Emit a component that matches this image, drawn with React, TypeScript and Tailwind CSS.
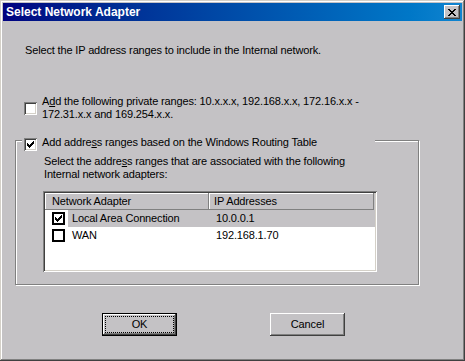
import type { ReactNode } from "react";

const CheckMark = () => (
  <svg width="7" height="7" viewBox="0 0 7 7" shapeRendering="crispEdges">
    <path
      d="M0 2h1v3H0zM1 3h1v3H1zM2 4h1v3H2zM3 3h1v3H3zM4 2h1v3H4zM5 1h1v3H5zM6 0h1v3H6z"
      fill="#000"
    />
  </svg>
);

const Checkbox = ({ checked }: { checked?: boolean }) => (
  <span className="flex h-[13px] w-[13px] shrink-0 items-center justify-center bg-white shadow-[inset_1px_1px_0_#808080,inset_-1px_-1px_0_#fff,inset_2px_2px_0_#404040,inset_-2px_-2px_0_#d4d0c8]">
    {checked && <CheckMark />}
  </span>
);

const ListCheckbox = ({ checked }: { checked?: boolean }) => (
  <span className="flex h-[13px] w-[13px] shrink-0 items-center justify-center border-2 border-black bg-white">
    {checked && <CheckMark />}
  </span>
);

const Button = ({ children, primary }: { children: ReactNode; primary?: boolean }) =>
  primary ? (
    <div className="h-[23px] w-[75px] border border-black">
      <div className="flex h-full w-full items-center justify-center bg-[#c4c2c5] p-[2px] shadow-[inset_-1px_-1px_0_#404040,inset_1px_1px_0_#fff,inset_-2px_-2px_0_#808080]">
        <div className="flex h-full w-full items-center justify-center border border-dotted border-black">
          {children}
        </div>
      </div>
    </div>
  ) : (
    <div className="flex h-[23px] w-[75px] items-center justify-center bg-[#c4c2c5] shadow-[inset_-1px_-1px_0_#404040,inset_1px_1px_0_#fff,inset_-2px_-2px_0_#808080]">
      {children}
    </div>
  );

const adapters = [
  { name: "Local Area Connection", ip: "10.0.0.1", checked: true, selected: true },
  { name: "WAN", ip: "192.168.1.70", checked: false, selected: false },
];

export default function App() {
  return (
    <div className="h-[361px] w-[465px] bg-[#c4c2c5] p-[3px] font-['Liberation_Sans',Arial,sans-serif] text-[11px] leading-[13px] tracking-[-0.15px] text-black shadow-[inset_-1px_-1px_0_#404040,inset_1px_1px_0_#d4d0c8,inset_-2px_-2px_0_#808080,inset_2px_2px_0_#fff]">
      {/* title bar */}
      <div className="flex h-[18px] items-center justify-between bg-linear-to-r from-[#000080] to-[#1084d0] pl-[3px]">
        <span className="text-[12px] font-bold leading-[14px] tracking-normal text-white">
          Select Network Adapter
        </span>
        <div className="mr-[2px] flex h-[14px] w-[16px] items-center justify-center bg-[#c4c2c5] shadow-[inset_-1px_-1px_0_#404040,inset_1px_1px_0_#fff,inset_-2px_-2px_0_#808080]">
          <svg width="8" height="7" viewBox="0 0 8 7" shapeRendering="crispEdges">
            <path
              d="M0 0h2v1H0zM6 0h2v1H6zM1 1h2v1H1zM5 1h2v1H5zM2 2h4v1H2zM3 3h2v1H3zM2 4h4v1H2zM1 5h2v1H1zM5 5h2v1H5zM0 6h2v1H0zM6 6h2v1H6z"
              fill="#000"
            />
          </svg>
        </div>
      </div>

      {/* body */}
      <div className="flex flex-col">
        <p className="ml-[22px] mt-[23px]">
          Select the IP address ranges to include in the Internal network.
        </p>

        <div className="ml-[21px] mt-[38px] flex items-center gap-[5px]">
          <Checkbox />
          <span>
            A<u>d</u>d the following private ranges: 10.x.x.x, 192.168.x.x, 172.16.x.x -
            <br />
            172.31.x.x and 169.254.x.x.
          </span>
        </div>

        {/* group box */}
        <div className="relative ml-[12px] mt-[19px] h-[145px] w-[404px] border border-[#808080] pl-[27px] pt-[14px] shadow-[inset_1px_1px_0_#fff,1px_1px_0_#fff]">
          <div className="absolute left-[6px] top-[-5px] flex h-[13px] w-[353px] items-start gap-[5px] bg-[#c4c2c5] pl-[2px]">
            <span className="mt-[2px]">
              <Checkbox checked />
            </span>
            <span>
              Add addre<u>s</u>s ranges based on the Windows Routing Table
            </span>
          </div>

          <p className="ml-[1px]">
            Select the addre<u>s</u>s ranges that are associated with the following
            <br />
            Internal network adapters:
          </p>

          {/* list view */}
          <div className="mt-[10px] h-[81px] w-[334px] bg-white p-[2px] shadow-[inset_1px_1px_0_#808080,inset_-1px_-1px_0_#fff,inset_2px_2px_0_#404040,inset_-2px_-2px_0_#d4d0c8]">
            <div className="flex h-[17px] leading-[17px]">
              <div className="w-[164px] bg-[#c4c2c5] pl-[7px] shadow-[inset_-1px_-1px_0_#808080,inset_1px_1px_0_#fff]">
                Network Adapter
              </div>
              <div className="w-[165px] bg-[#c4c2c5] pl-[5px] shadow-[inset_-1px_-1px_0_#808080,inset_1px_1px_0_#fff]">
                IP Addresses
              </div>
              <div className="flex-1 bg-[#c4c2c5]" />
            </div>
            {adapters.map((a) => (
              <div key={a.name} className="flex h-[17px] leading-[17px]">
                <div className="flex w-[23px] items-center pl-[7px]">
                  <ListCheckbox checked={a.checked} />
                </div>
                <div className={a.selected ? "flex flex-1 bg-[#c4c2c5]" : "flex flex-1"}>
                  <span className="w-[141px] pl-[4px]">{a.name}</span>
                  <span className="pl-[7px]">{a.ip}</span>
                </div>
              </div>
            ))}
          </div>
        </div>

        {/* buttons */}
        <div className="ml-[99px] mt-[28px] flex gap-[93px]">
          <Button primary>OK</Button>
          <Button>Cancel</Button>
        </div>
      </div>
    </div>
  );
}
